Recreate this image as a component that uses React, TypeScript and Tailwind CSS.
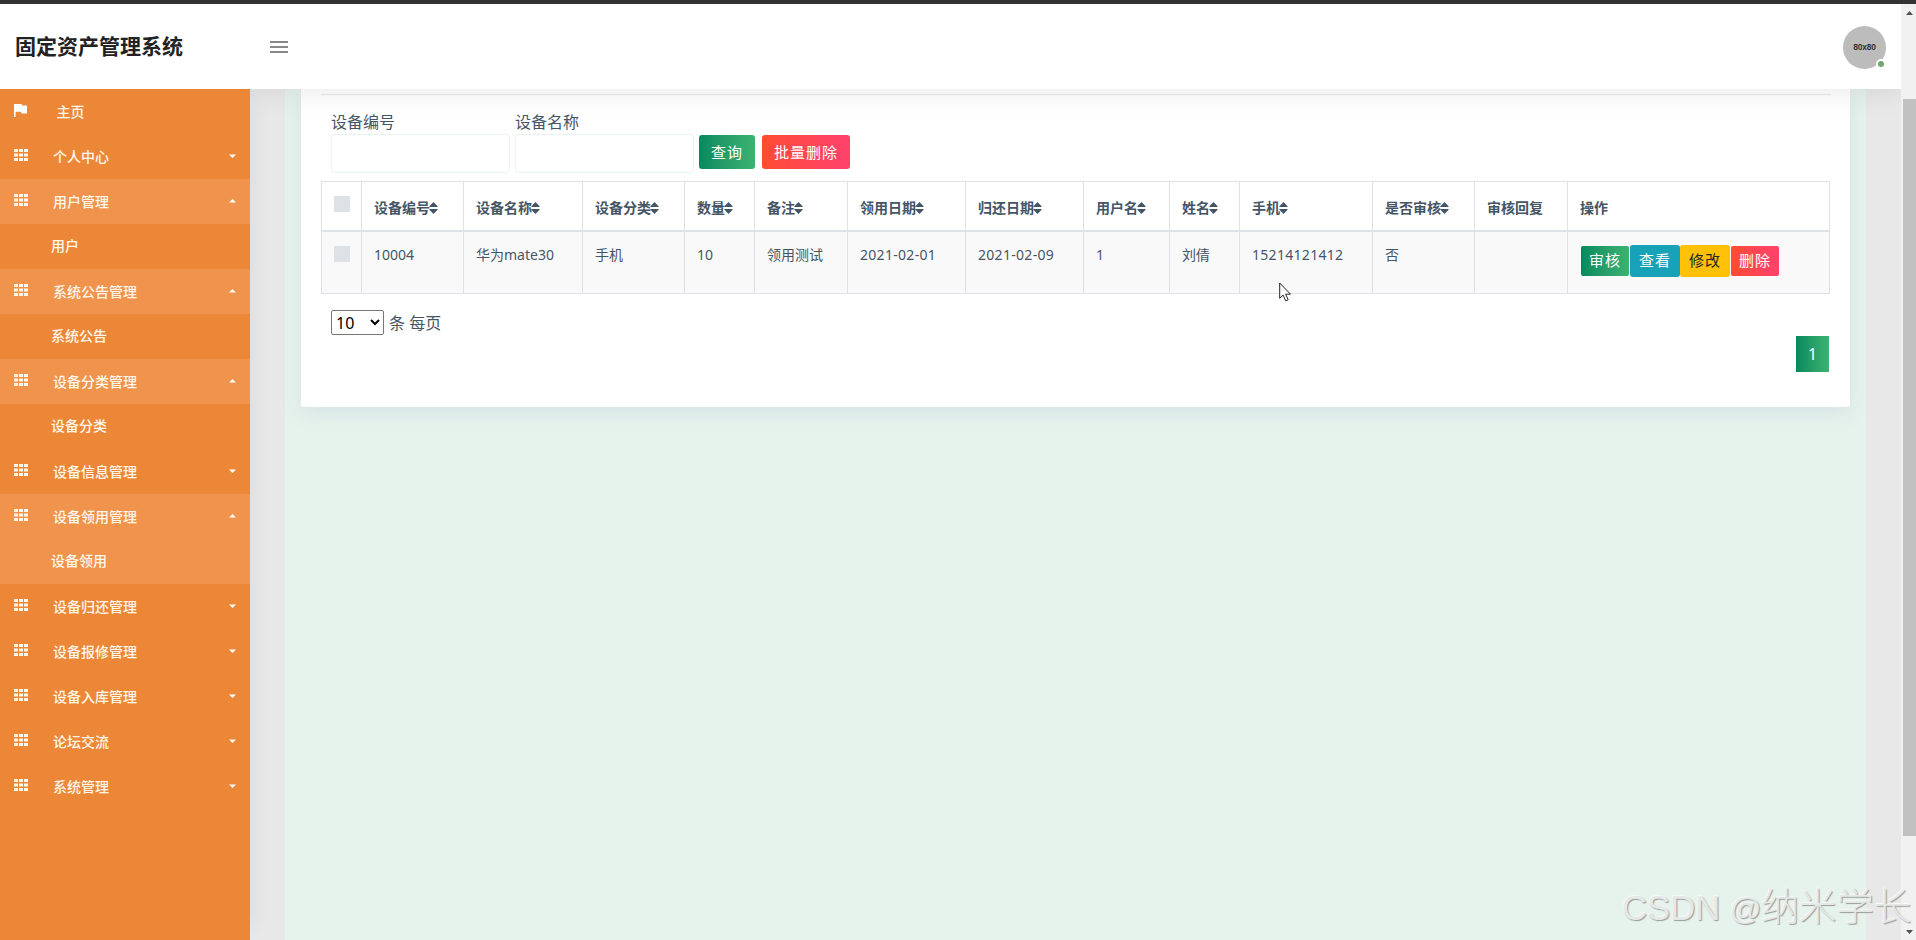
import React from 'react';

interface MenuItem {
  label: string;
  state?: 'open' | 'closed';
  active?: boolean;
  kind: 'home' | 'group' | 'sub';
}

const menu: MenuItem[] = [
  { label: '主页', kind: 'home' },
  { label: '个人中心', kind: 'group', state: 'closed' },
  { label: '用户管理', kind: 'group', state: 'open', active: true },
  { label: '用户', kind: 'sub' },
  { label: '系统公告管理', kind: 'group', state: 'open', active: true },
  { label: '系统公告', kind: 'sub' },
  { label: '设备分类管理', kind: 'group', state: 'open', active: true },
  { label: '设备分类', kind: 'sub' },
  { label: '设备信息管理', kind: 'group', state: 'closed' },
  { label: '设备领用管理', kind: 'group', state: 'open', active: true },
  { label: '设备领用', kind: 'sub', active: true },
  { label: '设备归还管理', kind: 'group', state: 'closed' },
  { label: '设备报修管理', kind: 'group', state: 'closed' },
  { label: '设备入库管理', kind: 'group', state: 'closed' },
  { label: '论坛交流', kind: 'group', state: 'closed' },
  { label: '系统管理', kind: 'group', state: 'closed' },
];

const columns = [
  { label: '设备编号', value: '10004', width: 102, sortable: true },
  { label: '设备名称', value: '华为mate30', width: 119, sortable: true },
  { label: '设备分类', value: '手机', width: 102, sortable: true },
  { label: '数量', value: '10', width: 70, sortable: true },
  { label: '备注', value: '领用测试', width: 93, sortable: true },
  { label: '领用日期', value: '2021-02-01', width: 118, sortable: true, spaced: true },
  { label: '归还日期', value: '2021-02-09', width: 118, sortable: true, spaced: true },
  { label: '用户名', value: '1', width: 86, sortable: true },
  { label: '姓名', value: '刘倩', width: 70, sortable: true },
  { label: '手机', value: '15214121412', width: 133, sortable: true, spaced: true },
  { label: '是否审核', value: '否', width: 102, sortable: true },
  { label: '审核回复', value: '', width: 93, sortable: false },
];

const GridIcon = () => (
  <svg width="14" height="12" viewBox="0 0 14 12" fill="#fff7ea">
    {[0, 5, 10].map(x => [0, 4.5, 9].map(y => (
      <rect key={`${x}-${y}`} x={x} y={y} width="4" height="3" />
    )))}
  </svg>
);

const FlagIcon = () => (
  <svg width="13" height="13" viewBox="0 0 13 13" fill="#fff">
    <path d="M0 0h7.6l.5 1.6H13v7.8H7.6L7 7.8H1.6V13H0z" />
  </svg>
);

const Caret = ({ up }: { up: boolean }) => (
  <svg width="7" height="4" viewBox="0 0 7 4" fill="#fff">
    <path d={up ? 'M0 3.5h7L3.5 0z' : 'M0 .5h7L3.5 4z'} />
  </svg>
);

const SortIcon = () => (
  <svg width="9" height="12" viewBox="0 0 9 12" fill="#455565" className="-ml-px shrink-0">
    <path d="M4.5 0 8.6 4.2q.4.8-.4.8H.8Q0 5 .4 4.2zM4.5 12 .4 7.8Q0 7 .8 7h7.4q.8 0 .4.8z" />
  </svg>
);

const Checkbox = () => <div className="w-4 h-4 bg-[#dee2e6]"></div>;

const Sidebar = () => (
  <aside className="relative z-20 w-[250px] shrink-0 bg-[#ec8738] shadow-[18px_0_18px_-14px_rgba(0,0,0,0.05)]">
    {menu.map(item => (
      <div
        key={item.label}
        className={`h-[45px] flex items-center text-sm font-medium text-[#fff7ea] ${item.active ? 'bg-[#ef934d]' : ''} ${item.kind === 'sub' ? 'pl-[51px] pb-0.5' : 'pl-3.5'}`}
      >
        {item.kind === 'home' && <div className="w-[42.5px] pb-0.5"><FlagIcon /></div>}
        {item.kind === 'group' && <div className="w-[39px] pb-[3px]"><GridIcon /></div>}
        <span className={item.kind === 'sub' ? '' : 'pt-px'}>{item.label}</span>
        {item.state && <div className="ml-auto mr-3.5 pb-0.5"><Caret up={item.state === 'open'} /></div>}
      </div>
    ))}
  </aside>
);

const Header = () => (
  <header className="relative z-10 h-[85px] shrink-0 bg-white flex items-center px-[15px] shadow-[0_5px_25px_rgba(0,0,0,0.08)]">
    <h1 className="w-[255px] pb-0.5 text-[21px] leading-8 font-bold text-[#222]">固定资产管理系统</h1>
    <div className="flex flex-col gap-[3px]">
      <div className="w-[18px] h-0.5 bg-[#888]"></div>
      <div className="w-[18px] h-0.5 bg-[#888]"></div>
      <div className="w-[18px] h-0.5 bg-[#888]"></div>
    </div>
    <div className="relative ml-auto mt-0.5 w-[43px] h-[43px] rounded-full bg-[#bcbcbc] flex items-center justify-center">
      <span className="text-[8.5px] tracking-[-0.2px] text-[#333] font-['Liberation_Sans',sans-serif] font-bold">80x80</span>
      <span className="absolute right-0 bottom-0 w-[10px] h-[10px] rounded-full bg-[#6fa86a] border-2 border-white"></span>
    </div>
  </header>
);

const SearchForm = () => (
  <div className="flex items-end pl-2.5">
    <label className="mr-[5px] text-base leading-[22px]">
      设备编号
      <input className="block w-[179px] h-[39px] mt-px rounded-sm border border-[#e9f1f1] bg-white px-3" />
    </label>
    <label className="mr-[5px] text-base leading-[22px]">
      设备名称
      <input className="block w-[179px] h-[39px] mt-px rounded-sm border border-[#e9f1f1] bg-white px-3" />
    </label>
    <button className="w-14 h-[34px] mb-1 mr-[7px] rounded-[3px] bg-linear-to-r from-[#038a5f] to-[#3cb371] text-white text-[15px] tracking-[1px]">查询</button>
    <button className="w-[88px] h-[34px] mb-1 rounded-[3px] bg-linear-to-r from-[#ff4b30] to-[#ff416c] text-white text-[15px] tracking-[1px]">批量删除</button>
  </div>
);

const DeviceTable = () => (
  <table className="w-[1509px] mt-2 table-fixed border-collapse text-sm text-left">
    <colgroup>
      <col className="w-10" />
      {columns.map(c => <col key={c.label} style={{ width: c.width }} />)}
      <col />
    </colgroup>
    <thead>
      <tr className="h-[49px]">
        <th className="border border-b-2 border-[#dee2e6] p-0 pl-3 pb-1"><Checkbox /></th>
        {columns.map(c => (
          <th key={c.label} className="border border-b-2 border-[#dee2e6] p-0 pl-3 pt-1 font-bold">
            <div className="flex items-center whitespace-nowrap leading-5">{c.label}{c.sortable && <SortIcon />}</div>
          </th>
        ))}
        <th className="border border-b-2 border-[#dee2e6] p-0 pl-3 pt-1 font-bold">操作</th>
      </tr>
    </thead>
    <tbody>
      <tr className="h-[63px] bg-[#f9f9f9] align-top">
        <td className="border border-[#dee2e6] p-0 pl-3 pt-3.5"><Checkbox /></td>
        {columns.map(c => (
          <td
            key={c.label}
            className={`border border-[#dee2e6] p-0 pl-3 pt-3 leading-[22px] whitespace-nowrap ${c.spaced ? 'tracking-[0.3px]' : ''}`}
          >
            {c.value}
          </td>
        ))}
        <td className="border border-[#dee2e6] p-0 pl-[13px] pt-[13px]">
          <div className="flex items-center text-[15px] tracking-[1px] text-white">
            <button className="w-12 h-[30px] mr-px rounded-[2px] bg-linear-to-r from-[#038a5f] to-[#3cb371]">审核</button>
            <button className="w-[50px] h-8 rounded-[3px] bg-[#17a2b8]">查看</button>
            <button className="w-[50px] h-8 mr-px rounded-[3px] bg-[#ffc107] text-[#212529]">修改</button>
            <button className="w-12 h-[30px] rounded-[2px] bg-linear-to-r from-[#ff4b30] to-[#ff416c]">删除</button>
          </div>
        </td>
      </tr>
    </tbody>
  </table>
);

const Scrollbar = () => (
  <div className="w-[15px] shrink-0 bg-[#f1f1f1] flex flex-col items-end">
    <div className="h-[95px] w-[13px] pt-[7px]">
      <svg width="7" height="4" viewBox="0 0 7 4" fill="#505050" className="ml-[3px]"><path d="M0 4h7L3.5 0z" /></svg>
    </div>
    <div className="h-[737px] w-[13px] bg-[#c1c1c1]"></div>
    <div className="mt-auto w-[13px] pb-1.5">
      <svg width="7" height="4" viewBox="0 0 7 4" fill="#505050" className="ml-[3px]"><path d="M0 0h7L3.5 4z" /></svg>
    </div>
  </div>
);

export default function App() {
  return (
    <div className="relative w-[1916px] h-[940px] overflow-hidden flex flex-col bg-[#e8e8e8] text-[#455565] font-['Noto_Sans','Noto_Sans_CJK_SC',sans-serif]">
      <div className="h-1 shrink-0 bg-[#333]"></div>
      <div className="flex flex-1 min-h-0">
        <div className="flex-1 flex flex-col overflow-hidden">
          <Header />
          <div className="flex flex-1 min-h-0">
            <Sidebar />
            <main className="flex-1 mx-[35px] px-4 bg-[#e6f3ec]">
              <div className="h-[318px] px-5 rounded-b-[3px] bg-white shadow-[0_5px_20px_rgba(190,205,225,0.45)]">
                <div className="h-1.5 mb-4 mr-[-1px] border-b border-[#e8e8e8]"></div>
                <SearchForm />
                <DeviceTable />
                <div className="flex items-center pl-2.5 mt-4 gap-[5px] text-base leading-6">
                  <select className="w-[53px] h-[25px] rounded-[2px] border border-[#767676] bg-white text-black">
                    <option>10</option>
                  </select>
                  <span>条 每页</span>
                </div>
                <div className="flex justify-end pr-px">
                  <button className="w-[33px] h-9 mt-px bg-linear-to-r from-[#038a5f] to-[#3cb371] text-white text-base">1</button>
                </div>
              </div>
            </main>
          </div>
        </div>
        <Scrollbar />
      </div>

      {/* mouse pointer */}
      <svg width="13" height="20" viewBox="0 0 13 20" className="absolute left-[1279px] top-[282px] z-30">
        <path d="M.7 1v15.3l3.4-3.2 2.6 5.7 2.5-1-2.6-5.6h4.9z" fill="#fff" stroke="#222" strokeWidth="1" />
      </svg>

      <div className="absolute left-[1622px] top-[883px] z-30 whitespace-nowrap text-[34.7px] leading-[48px] font-light text-[#e4e8e6] font-['Liberation_Sans','Noto_Sans_CJK_SC',sans-serif] [text-shadow:1px_1px_1px_#999,-1px_-1px_0_#f5f8f6]">
        CSDN <span className="text-[31px]">@</span><span className="text-[37.5px]">纳米学长</span>
      </div>
    </div>
  );
}
